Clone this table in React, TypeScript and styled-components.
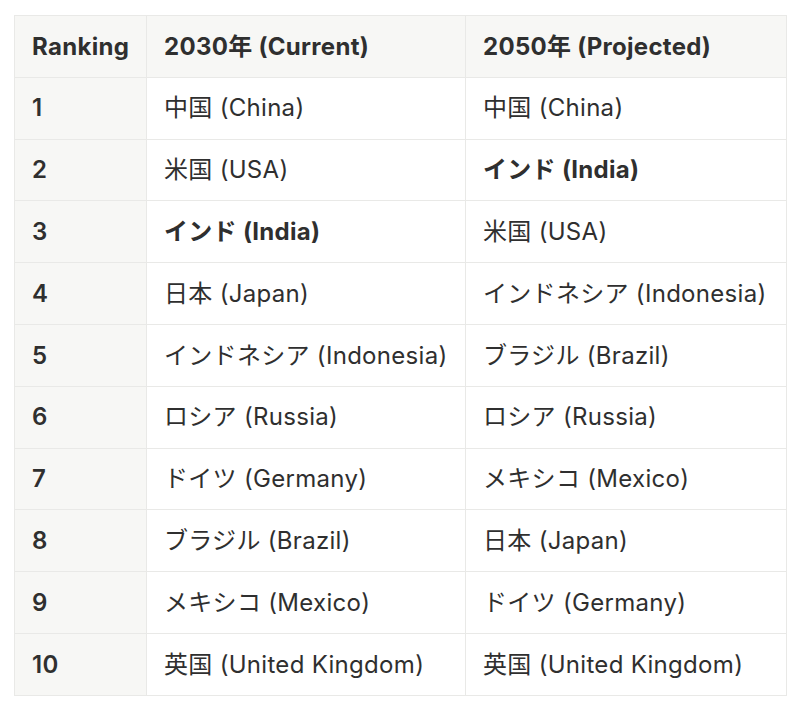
import React from "react";
import styled, { createGlobalStyle, css } from "styled-components";

const Global = createGlobalStyle`
  html, body { margin: 0; padding: 0; background: #ffffff; }
  body { font-family: "Inter", "Noto Sans CJK JP", sans-serif; color: #2f2f2f; }
`;

const Wrap = styled.div`
  padding: 15px 14px 0 14px;
`;

const Table = styled.table`
  border-collapse: collapse;
  width: 772px;
  table-layout: fixed;
  font-size: 24px;
  line-height: 1.4;
  letter-spacing: 0.3px;
`;

const Col = styled.col<{ $w: number }>`
  width: ${(p) => p.$w}px;
`;

const Row = styled.tr`
  height: 61.8px;
`;

const cellBase = css`
  border: 1px solid #e9e9e7;
  padding: 0 17px;
  vertical-align: middle;
  white-space: nowrap;
  text-align: left;
  color: #2f2f2f;
`;

const HeadCell = styled.th`
  ${cellBase};
  background: #f7f7f5;
  font-weight: 700;
`;

const RankCell = styled.td`
  ${cellBase};
  background: #f7f7f5;
  font-weight: 600;
`;

const Cell = styled.td`
  ${cellBase};
  background: #ffffff;
  font-weight: 400;
`;

const Strong = styled.span`
  font-weight: 700;
`;

type Entry = { text: string; bold?: boolean };

const rows: [string, Entry, Entry][] = [
  ["1", { text: "中国 (China)" }, { text: "中国 (China)" }],
  ["2", { text: "米国 (USA)" }, { text: "インド (India)", bold: true }],
  ["3", { text: "インド (India)", bold: true }, { text: "米国 (USA)" }],
  ["4", { text: "日本 (Japan)" }, { text: "インドネシア (Indonesia)" }],
  ["5", { text: "インドネシア (Indonesia)" }, { text: "ブラジル (Brazil)" }],
  ["6", { text: "ロシア (Russia)" }, { text: "ロシア (Russia)" }],
  ["7", { text: "ドイツ (Germany)" }, { text: "メキシコ (Mexico)" }],
  ["8", { text: "ブラジル (Brazil)" }, { text: "日本 (Japan)" }],
  ["9", { text: "メキシコ (Mexico)" }, { text: "ドイツ (Germany)" }],
  ["10", { text: "英国 (United Kingdom)" }, { text: "英国 (United Kingdom)" }],
];

const Value = ({ e }: { e: Entry }) => (e.bold ? <Strong>{e.text}</Strong> : <>{e.text}</>);

export default function App() {
  return (
    <>
      <Global />
      <Wrap>
        <Table>
          <colgroup>
            <Col $w={132} />
            <Col $w={319} />
            <Col $w={321} />
          </colgroup>
          <thead>
            <Row>
              <HeadCell>Ranking</HeadCell>
              <HeadCell>2030年 (Current)</HeadCell>
              <HeadCell>2050年 (Projected)</HeadCell>
            </Row>
          </thead>
          <tbody>
            {rows.map(([rank, a, b]) => (
              <Row key={rank}>
                <RankCell>{rank}</RankCell>
                <Cell><Value e={a} /></Cell>
                <Cell><Value e={b} /></Cell>
              </Row>
            ))}
          </tbody>
        </Table>
      </Wrap>
    </>
  );
}
